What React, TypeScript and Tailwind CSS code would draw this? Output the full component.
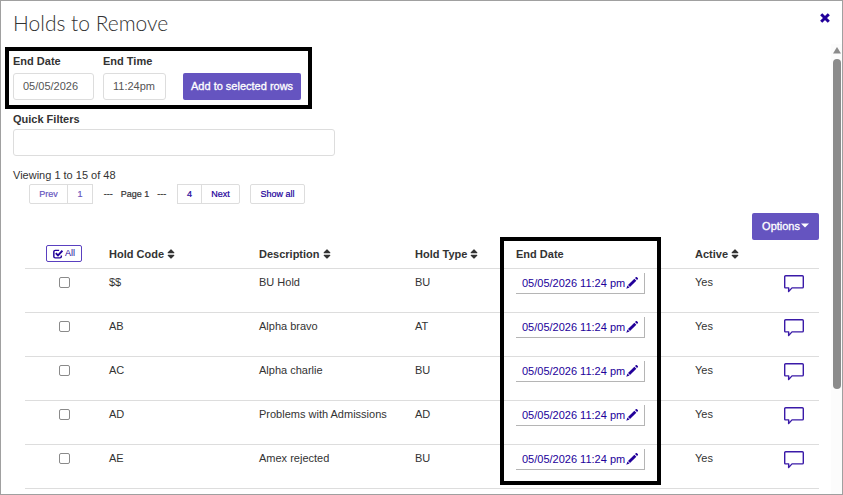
import { FaSort } from "react-icons/fa"

const holds = [
  { code: "$$", description: "BU Hold", type: "BU" },
  { code: "AB", description: "Alpha bravo", type: "AT" },
  { code: "AC", description: "Alpha charlie", type: "BU" },
  { code: "AD", description: "Problems with Admissions", type: "AD" },
  { code: "AE", description: "Amex rejected", type: "BU" },
]

function CloseIcon() {
  return (
    <svg width="10" height="10" viewBox="0 0 10 10" fill="none" stroke="currentColor" strokeWidth="3">
      <path d="M1.2 1.2l7.6 7.6M8.8 1.2L1.2 8.8" />
    </svg>
  )
}

function CheckIcon() {
  return (
    <svg width="10" height="10" viewBox="0 0 18 18" fill="none" stroke="currentColor">
      <path d="M11 2.500H4A2.500 2.500 0 0 0 1.500 5v8.500A2.500 2.500 0 0 0 4 16h8.500a2.500 2.500 0 0 0 2.500-2.500V11.500" strokeWidth="2.600" />
      <path d="M5 7.500l4 4 8-8.500" strokeWidth="3.400" />
    </svg>
  )
}

function PencilIcon() {
  return (
    <svg width="12" height="12" viewBox="0 0 24 24" fill="currentColor">
      <path d="M18 2l1.500-1.500a1.800 1.800 0 0 1 2.500 0L23.500 2a1.800 1.800 0 0 1 0 2.500L22 6z" />
      <path d="M16.700 3.300l4 4L8 20l-4-4z" />
      <path d="M3 17l4 4-6.500 2.500z" />
    </svg>
  )
}

function CaretIcon() {
  return (
    <svg width="8" height="5" viewBox="0 0 8 5" fill="currentColor">
      <path d="M0 .5h8L4 4.500z" />
    </svg>
  )
}

function CommentIcon() {
  return (
    <svg width="20" height="18" viewBox="0 0 20 18" fill="none" stroke="currentColor" strokeWidth="1.400" strokeLinejoin="round">
      <path d="M1.700.7h16.600q1 0 1 1v10.200q0 1-1 1H8L4.600 16.600l.1-3.700h-3q-1 0-1-1V1.700q0-1 1-1z" />
    </svg>
  )
}

function SortHeader({ label }: { label: string }) {
  return (
    <th className="px-2 text-left font-bold">
      <span className="flex items-center gap-px">
        {label}
        <FaSort size={12} />
      </span>
    </th>
  )
}

export default function App() {
  return (
    <div
      className="
      h-screen flex flex-col overflow-hidden
      bg-white border border-[#a0a0a0]
      font-['Liberation_Sans',Arial,sans-serif] text-[11px] leading-4 text-[#333]
      "
    >

      {/* ================= HEADER ================= */}
      <header className="h-[43px] shrink-0 flex items-start justify-between px-3">
        <h1 className="pt-2 font-['Lato',sans-serif] font-light text-[21px] leading-7">
          Holds to Remove
        </h1>
        <button type="button" aria-label="Close" className="mt-3 text-[#22009a]">
          <CloseIcon />
        </button>
      </header>

      <div className="flex flex-1 min-h-0">

        <main className="flex-1 min-w-0 overflow-hidden pt-[3px] pr-3">

          {/* ================= END DATE FORM ================= */}
          <form className="ml-1 w-fit flex items-end border-4 border-black pl-1 pr-[7px] pt-[2px] pb-[5px]">
            <div className="flex flex-col gap-1 mr-[9px]">
              <label htmlFor="end-date" className="font-bold">End Date</label>
              <input
                id="end-date"
                defaultValue="05/05/2026"
                className="w-[81px] h-[27px] px-[9px] pb-[2px] border border-[#ddd] rounded-[3px] text-[#555]"
              />
            </div>
            <div className="flex flex-col gap-1 mr-[17px]">
              <label htmlFor="end-time" className="font-bold">End Time</label>
              <input
                id="end-time"
                defaultValue="11:24pm"
                className="w-[63px] h-[27px] px-[9px] pb-[2px] border border-[#ddd] rounded-[3px] text-[#555]"
              />
            </div>
            <button
              type="button"
              className="h-[27px] px-2 pb-[2px] rounded-[2px] bg-[#6554c0] text-white [-webkit-text-stroke:0.3px]"
            >
              Add to selected rows
            </button>
          </form>

          {/* ================= FILTER ================= */}
          <div className="pl-3 pt-[2px] flex flex-col gap-[2px]">
            <label htmlFor="quick-filters" className="font-bold">Quick Filters</label>
            <input
              id="quick-filters"
              className="w-[322px] h-[27px] px-[9px] border border-[#ddd] rounded-[3px]"
            />
          </div>

          {/* ================= PAGINATION ================= */}
          <p className="pl-3 pt-[11px]">Viewing 1 to 15 of 48</p>
          <nav className="ml-7 h-5 mt-px flex items-stretch text-[9px] text-[#22009a] [-webkit-text-stroke:0.2px]">
            <button type="button" className="w-[39px] border border-[#ddd] rounded-l-[2px] text-[#6554c0]">Prev</button>
            <button type="button" className="w-[26px] -ml-px border border-[#ddd] text-[#6554c0]">1</button>
            <span className="w-[84px] flex items-center justify-center gap-2 text-[#333]">
              <span>---</span>
              <span>Page 1</span>
              <span>---</span>
            </span>
            <button type="button" className="w-[25px] border border-[#ddd]">4</button>
            <button type="button" className="w-[39px] -ml-px border border-[#ddd] rounded-r-[2px]">Next</button>
            <button type="button" className="w-[55px] ml-[10px] border border-[#ddd] rounded-[2px]">Show all</button>
          </nav>

          <div className="flex justify-end pt-[9px]">
            <button
              type="button"
              className="h-[27px] px-[10px] pb-[2px] flex items-center gap-px rounded-[2px] bg-[#6554c0] text-white [-webkit-text-stroke:0.3px]"
            >
              Options
              <CaretIcon />
            </button>
          </div>

          {/* ================= TABLE ================= */}
          <div className="relative ml-6">
            <table className="w-full table-fixed border-collapse">
              <colgroup>
                <col className="w-[76px]" />
                <col className="w-[150px]" />
                <col />
                <col className="w-[101px]" />
                <col className="w-[179px]" />
                <col className="w-[80px]" />
                <col className="w-[52px]" />
              </colgroup>
              <thead>
                <tr className="h-[28px] border-b border-[#ddd]">
                  <th className="pl-[2px]">
                    <button
                      type="button"
                      className="
                      mx-auto w-[36px] h-[17px] flex items-center justify-center gap-[2px]
                      border border-[#5a40c0] rounded-[2px]
                      text-[9px] leading-none font-normal text-[#22009a]
                      "
                    >
                      <CheckIcon />
                      All
                    </button>
                  </th>
                  <SortHeader label="Hold Code" />
                  <SortHeader label="Description" />
                  <SortHeader label="Hold Type" />
                  <th className="px-2 text-left font-bold">End Date</th>
                  <SortHeader label="Active" />
                  <th />
                </tr>
              </thead>
              <tbody>
                {holds.map((h) => (
                  <tr key={h.code} className="h-11 border-b border-[#ddd] align-top">
                    <td className="pt-2 pl-[2px]">
                      <input
                        type="checkbox"
                        aria-label={`Select ${h.code}`}
                        className="block mx-auto size-[11px] appearance-none border border-[#8a8a8a] rounded-[2px]"
                      />
                    </td>
                    <td className="px-2 pt-[5px]">{h.code}</td>
                    <td className="px-2 pt-[5px]">{h.description}</td>
                    <td className="px-2 pt-[5px]">{h.type}</td>
                    <td className="px-2 pt-1">
                      <button
                        type="button"
                        className="
                        w-[129px] h-[21px] pl-[6px] flex items-center gap-px
                        border-r border-b border-[#b5b5b5] text-[#22009a] whitespace-nowrap
                        "
                      >
                        05/05/2026 11:24 pm
                        <PencilIcon />
                      </button>
                    </td>
                    <td className="px-2 pt-[5px]">Yes</td>
                    <td className="pt-[6px] pl-[2px]">
                      <button type="button" aria-label="Comment" className="block mx-auto text-[#3a1aa8]">
                        <CommentIcon />
                      </button>
                    </td>
                  </tr>
                ))}
              </tbody>
            </table>

            {/* highlight round the End Date column */}
            <div className="absolute -top-[3px] right-[158px] w-[161px] h-[248px] border-4 border-black pointer-events-none" />
          </div>
        </main>

        {/* ================= SCROLLBAR ================= */}
        <div className="w-[11px] shrink-0 flex flex-col items-center bg-[#fcfcfc]">
          <svg className="mt-[3px]" width="8" height="7" viewBox="0 0 8 7" fill="#8b8b8b">
            <path d="M4 0L8 6.500H0z" />
          </svg>
          <div className="mt-[5px] w-2 h-[330px] rounded-full bg-[#8b8b8b]" />
        </div>
      </div>
    </div>
  )
}
